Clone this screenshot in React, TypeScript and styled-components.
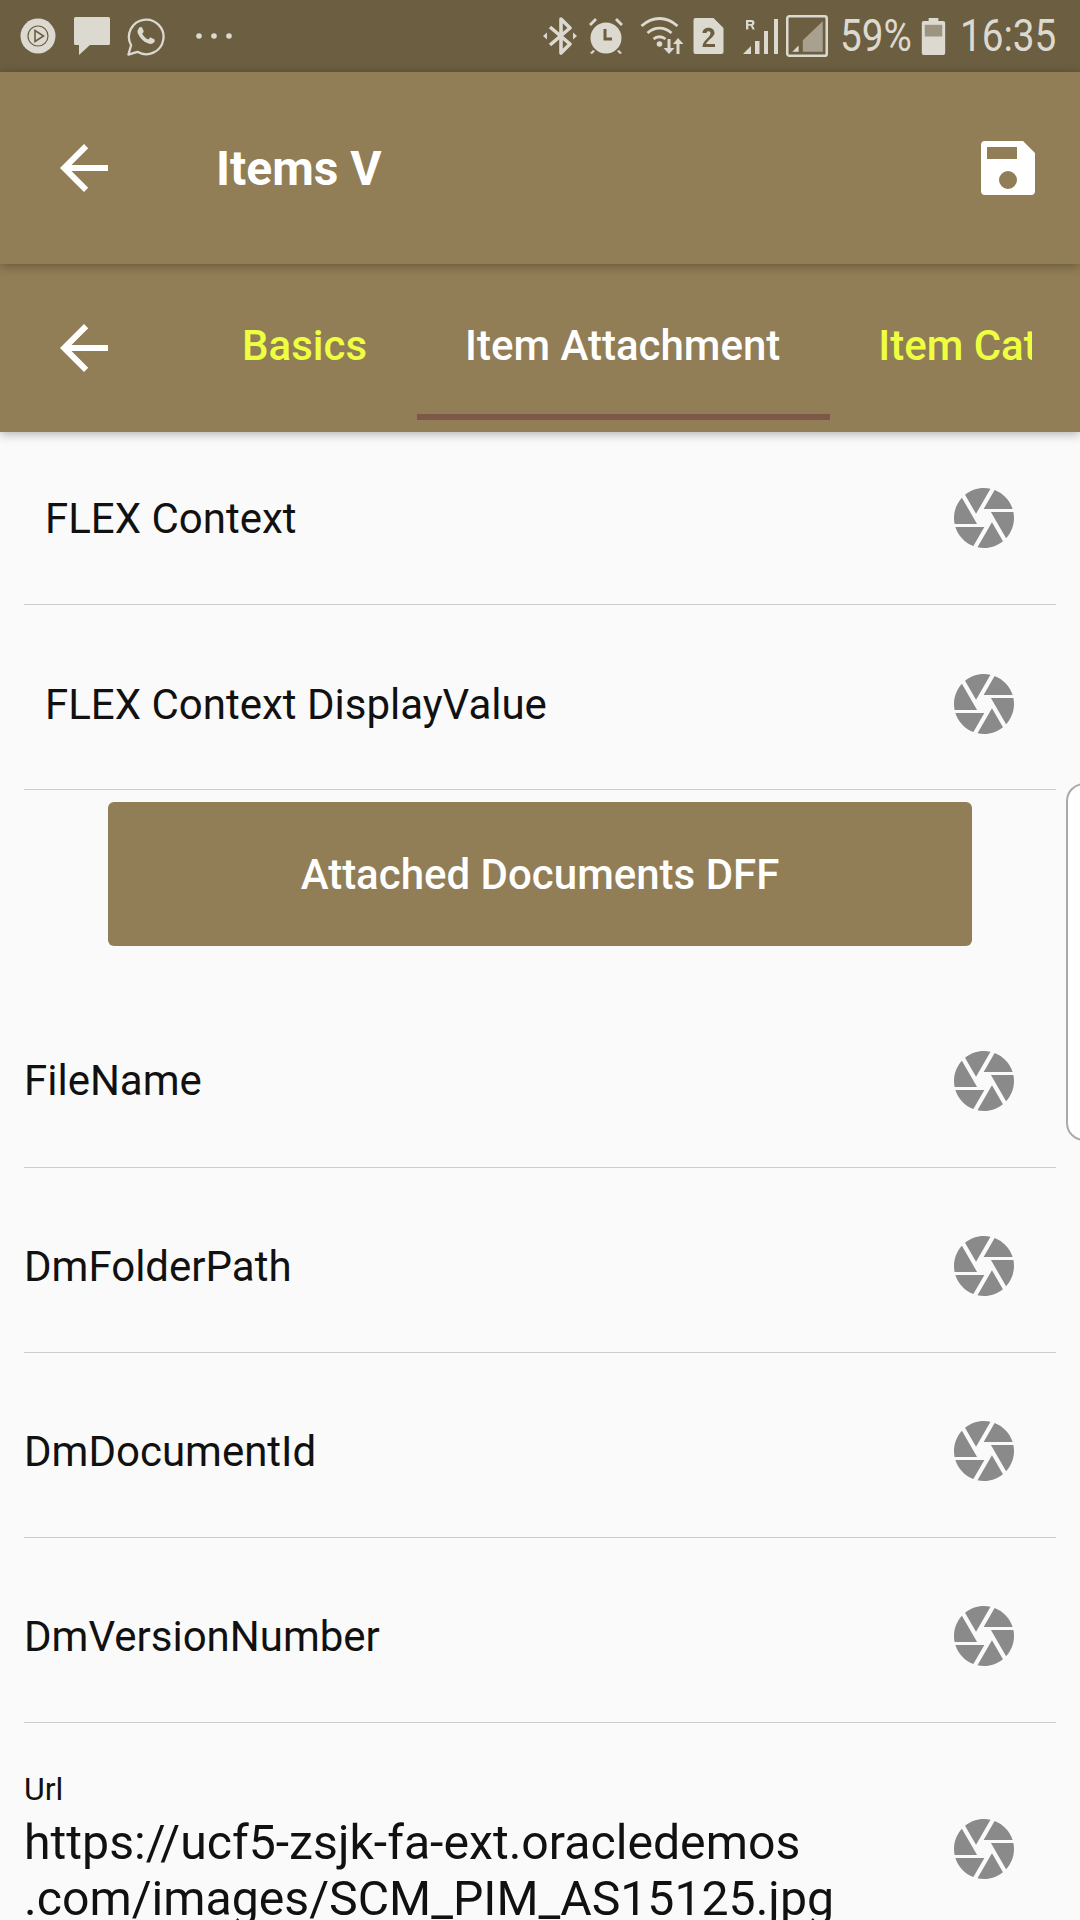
import React from "react";
import styled, { createGlobalStyle } from "styled-components";

const Global = createGlobalStyle`
  html, body { margin: 0; padding: 0; background: #fafafa; }
  * { box-sizing: border-box; }
`;

const Screen = styled.div`
  width: 1080px;
  height: 1920px;
  overflow: hidden;
  position: relative;
  background: #fafafa;
  font-family: Roboto, "Noto Sans", sans-serif;
  color: #111;
`;

const StatusBar = styled.div`
  height: 72px;
  background: #6c5e40;
  color: #dcd9d0;
  display: flex;
  align-items: center;
  justify-content: space-between;
  padding: 0 24px 0 20px;
`;
const StatusGroup = styled.div`
  display: flex;
  align-items: center;
`;
const StatusSlot = styled.span<{ $ml?: number; $w: number }>`
  display: flex;
  align-items: center;
  flex: none;
  margin-left: ${(p) => p.$ml ?? 0}px;
  width: ${(p) => p.$w}px;
`;
const StatusText = styled.span`
  font-size: 45px;
  line-height: 72px;
  display: inline-block;
  transform: scaleX(0.86);
  transform-origin: left center;
  white-space: nowrap;
`;

const Bar = styled.div<{ $h: number }>`
  height: ${(p) => p.$h}px;
  background: #917d56;
  position: relative;
  display: flex;
  align-items: center;
  box-shadow: 0 2px 10px rgba(0, 0, 0, 0.3);
`;
const Header = styled(Bar)`
  z-index: 2;
  padding-left: 48px;
`;
const TabBar = styled(Bar)`
  z-index: 1;
  padding-left: 48px;
  align-items: flex-start;
`;
const BackSlot = styled.div<{ $h?: number }>`
  width: 100px;
  height: ${(p) => (p.$h ? `${p.$h}px` : "auto")};
  display: flex;
  align-items: center;
  flex: none;
`;
const Title = styled.h1`
  margin: 0 0 0 68px;
  font-size: 48px;
  font-weight: 700;
  color: #fff;
  flex: 1;
`;
const SaveSlot = styled.div`
  width: 54px;
  margin-right: 45px;
  display: flex;
`;
const Tabs = styled.div`
  display: flex;
  width: 838px;
  margin-left: 46px;
  overflow: hidden;
`;
const Tab = styled.div<{ $active?: boolean }>`
  flex: none;
  padding: 12px 50px 0 48px;
  height: 156px;
  display: flex;
  align-items: center;
  font-size: 42px;
  font-weight: 500;
  color: ${(p) => (p.$active ? "#fff" : "#eeff41")};
  border-bottom: 6px solid ${(p) => (p.$active ? "#7b5848" : "transparent")};
`;

const Body = styled.div`
  padding: 0 24px;
`;
const Row = styled.div<{ $h: number; $inset?: boolean; $top: number }>`
  height: ${(p) => p.$h}px;
  border-bottom: 1.5px solid #c9ced2;
  display: flex;
  align-items: center;
  justify-content: space-between;
  padding: ${(p) => p.$top}px 36px 0 ${(p) => (p.$inset ? 21 : 0)}px;
  font-size: 42px;
`;
const UrlRow = styled.div`
  display: flex;
  align-items: center;
  justify-content: space-between;
  padding: 47px 36px 0 0;
`;
const UrlText = styled.div`
  display: flex;
  flex-direction: column;
`;
const UrlLabel = styled.div`
  font-size: 32px;
  line-height: 38px;
  margin-bottom: 7px;
`;
const UrlValue = styled.div`
  font-size: 48.2px;
  line-height: 56px;
  white-space: pre;
`;
const ActionRow = styled.div`
  display: flex;
  justify-content: center;
  padding: 12px 0 34px;
`;
const ActionButton = styled.button`
  width: 864px;
  height: 144px;
  padding: 1px 0 0;
  background: #917d56;
  color: #fff;
  border: none;
  border-radius: 6px;
  font-family: inherit;
  font-size: 42px;
  font-weight: 500;
`;
const EdgeHandle = styled.div`
  position: absolute;
  left: 1066px;
  top: 783px;
  width: 40px;
  height: 358px;
  border: 2px solid #aaa;
  border-radius: 18px;
  background: #fff;
`;

const Shutter = () => (
  <svg width="72" height="72" viewBox="0 0 24 24" fill="#8a8a8a" aria-hidden>
    <path d="M9.4 10.5l4.77-8.26C13.47 2.09 12.75 2 12 2c-2.4 0-4.6.85-6.32 2.25l3.66 6.35.06-.1zM21.54 9c-.92-2.92-3.15-5.26-6-6.34L11.88 9h9.66zm.26 1h-7.49l.29.5 4.76 8.25C21 16.97 22 14.61 22 12c0-.69-.07-1.35-.2-2zM8.54 12l-3.9-6.75C3.01 7.03 2 9.39 2 12c0 .69.07 1.35.2 2h7.49l-1.15-2zm-6.08 3c.92 2.92 3.15 5.26 6 6.34L12.12 15H2.46zm11.27 0l-3.9 6.76c.7.15 1.42.24 2.17.24 2.4 0 4.6-.85 6.32-2.25l-3.66-6.35-.93 1.6z" />
  </svg>
);

const Back = () => (
  <svg width="72" height="72" viewBox="0 0 24 24" fill="#fff" aria-hidden>
    <path d="M20 11H7.83l5.59-5.59L12 4l-8 8 8 8 1.41-1.41L7.83 13H20v-2z" />
  </svg>
);

const Save = () => (
  <svg width="54" height="54" viewBox="0 0 54 54" fill="#fff" aria-hidden>
    <path
      fillRule="evenodd"
      d="M4 0h38l12 12v38a4 4 0 0 1-4 4H4a4 4 0 0 1-4-4V4a4 4 0 0 1 4-4zM6 6v12h30V6zM27 30a9 9 0 1 0 0 18 9 9 0 0 0 0-18z"
    />
  </svg>
);

const c = "#dcd9d0";
const bg = "#6c5e40";

const PlayBadge = () => (
  <svg width="36" height="36" viewBox="0 0 36 36" aria-hidden>
    <circle cx="18" cy="18" r="17.5" fill={c} />
    <circle cx="18" cy="18" r="10" fill="none" stroke={bg} strokeWidth="1.2" />
    <path d="M15 12.5v11l8.500-5.500z" fill="none" stroke={bg} strokeWidth="1.6" />
  </svg>
);
const Chat = () => (
  <svg width="36" height="38" viewBox="0 0 36 38" aria-hidden>
    <path d="M1.500 0h33a1.500 1.500 0 0 1 1.500 1.500v25a1.500 1.500 0 0 1-1.500 1.500H16L5 38V28H1.500A1.500 1.500 0 0 1 0 26.500v-25A1.500 1.500 0 0 1 1.500 0z" fill={c} />
  </svg>
);
const Whats = () => (
  <svg width="38" height="39" viewBox="0 0 40 41" aria-hidden>
    <path d="M1.500 39.500l2.800-9.800A18.200 18.200 0 1 1 11 36.600z" fill="none" stroke={c} strokeWidth="2.400" strokeLinejoin="round" />
    <path d="M12.500 11.500c1-1.300 3-1.400 3.500-.2l1.500 3.300c.2.600 0 1.100-.4 1.600l-1.100 1.300c1.400 2.800 3.300 4.600 6.400 6.200l1.500-1.600c.5-.5 1-.6 1.600-.3l3.100 1.500c.9.500.9 2.400-.2 3.500-1.500 1.600-3.800 1.900-6.300.9-5.200-2-8.800-5.800-10.600-10.400-.8-2.100-.5-3.900 1-5.300z" fill={c} />
  </svg>
);
const Dots = () => (
  <svg width="38" height="8" viewBox="0 0 38 8" aria-hidden>
    <circle cx="4" cy="4" r="2.800" fill={c} />
    <circle cx="19" cy="4" r="2.800" fill={c} />
    <circle cx="34" cy="4" r="2.800" fill={c} />
  </svg>
);
const BT = () => (
  <svg width="34" height="38" viewBox="0 0 34 38" aria-hidden>
    <path d="M7 10l20 17-9 9V2l9 9L7 28" fill="none" stroke={c} strokeWidth="3.600" strokeLinejoin="round" />
    <path d="M0 19l4-3.500v7zM34 19l-4-3.500v7z" fill={c} />
  </svg>
);
const Alarm = () => (
  <svg width="36" height="38" viewBox="0 0 36 38" aria-hidden>
    <circle cx="18" cy="21" r="15.500" fill={c} />
    <path d="M17 12v10h7" fill="none" stroke={bg} strokeWidth="3" />
    <path d="M1 7l6-6 2 2-6 6zM35 7l-6-6-2 2 6 6zM5 33l-3 3 2 1 3-3zM31 33l3 3-2 1-3-3z" fill={c} />
  </svg>
);
const Wifi = () => (
  <svg width="49" height="38" viewBox="0 0 46 38" aria-hidden>
    <path d="M2 9c11-10 25-10 36 0M8 16c7-6.500 17-6.500 24 0M14 22c3.500-3 8.500-3 12 0" fill="none" stroke={c} strokeWidth="2.800" />
    <circle cx="20" cy="27" r="2.800" fill={c} />
    <path d="M28 22h3v9h4l-5.500 6L24 31h4zM40 37h-3v-10h-3.500l5-6 5.500 6H40z" fill={c} />
  </svg>
);
const Sim = () => (
  <svg width="31" height="36" viewBox="0 0 30 36" aria-hidden>
    <path d="M2 0h18l10 10v24a2 2 0 0 1-2 2H2a2 2 0 0 1-2-2V2a2 2 0 0 1 2-2z" fill={c} />
    <path d="M9 15c0-7 12-7 12 0 0 4-7 7-8.500 11H21.500v3H9c0-7 8-9 8-14 0-2.500-4-2.500-4 0z" fill={bg} />
  </svg>
);
const Signal = () => (
  <svg width="36" height="38" viewBox="0 0 36 38" aria-hidden>
    <path d="M0 37l8-8v8zM12 24h4.500v13H12zM21 14h4v23h-4zM31 2h4v35h-4z" fill={c} />
    <path d="M3 3h5.500c2 0 3 1 3 2.800 0 1.400-.6 2.200-1.700 2.600l2 4.100H9.500L7.800 8.800H5.300v3.700H3zM5.300 5v2h3c1 0 1-2 0-2z" fill={c} />
  </svg>
);
const Signal2 = () => (
  <svg width="42" height="42" viewBox="0 0 40 40" aria-hidden>
    <rect x="1.200" y="1.200" width="37.600" height="37.600" rx="2" fill="none" stroke={c} strokeWidth="2.400" />
    <path d="M6 35l6-6v6z" fill={c} />
    <path d="M16 35V24L35 6v29z" fill={c} opacity="0.55" />
  </svg>
);
const Battery = () => (
  <svg width="25" height="37" viewBox="0 0 24 38" aria-hidden>
    <path d="M7 0h10v3h5a2 2 0 0 1 2 2v31a2 2 0 0 1-2 2H2a2 2 0 0 1-2-2V5a2 2 0 0 1 2-2h5z" fill={c} />
    <rect x="3" y="7" width="18" height="12" fill="#9d9480" />
  </svg>
);

const fields = ["FileName", "DmFolderPath", "DmDocumentId", "DmVersionNumber"];

export default function App() {
  return (
    <Screen>
      <Global />
      <StatusBar>
        <StatusGroup>
          <StatusSlot $w={36}><PlayBadge /></StatusSlot>
          <StatusSlot $w={36} $ml={18}><Chat /></StatusSlot>
          <StatusSlot $w={38} $ml={17}><Whats /></StatusSlot>
          <StatusSlot $w={38} $ml={30}><Dots /></StatusSlot>
        </StatusGroup>
        <StatusGroup>
          <StatusSlot $w={34}><BT /></StatusSlot>
          <StatusSlot $w={36} $ml={11}><Alarm /></StatusSlot>
          <StatusSlot $w={49} $ml={14}><Wifi /></StatusSlot>
          <StatusSlot $w={31} $ml={6}><Sim /></StatusSlot>
          <StatusSlot $w={36} $ml={19}><Signal /></StatusSlot>
          <StatusSlot $w={42} $ml={7}><Signal2 /></StatusSlot>
          <StatusSlot $w={68} $ml={12}><StatusText>59%</StatusText></StatusSlot>
          <StatusSlot $w={25} $ml={13}><Battery /></StatusSlot>
          <StatusSlot $w={96} $ml={14}><StatusText>16:35</StatusText></StatusSlot>
        </StatusGroup>
      </StatusBar>
      <Header $h={192}>
        <BackSlot>
          <Back />
        </BackSlot>
        <Title>Items V</Title>
        <SaveSlot>
          <Save />
        </SaveSlot>
      </Header>
      <TabBar $h={168}>
        <BackSlot $h={168}>
          <Back />
        </BackSlot>
        <Tabs>
          <Tab>Basics</Tab>
          <Tab $active>Item Attachment</Tab>
          <Tab>Item Category</Tab>
        </Tabs>
      </TabBar>
      <Body>
        <Row $h={173} $top={0} $inset>
          FLEX Context
          <Shutter />
        </Row>
        <Row $h={185} $top={14} $inset>
          FLEX Context DisplayValue
          <Shutter />
        </Row>
        <ActionRow>
          <ActionButton>Attached Documents DFF</ActionButton>
        </ActionRow>
        {fields.map((f, i) => (
          <Row key={f} $h={i === 0 ? 188 : 185} $top={i === 0 ? 14 : 12}>
            {f}
            <Shutter />
          </Row>
        ))}
        <UrlRow>
          <UrlText>
            <UrlLabel>Url</UrlLabel>
            <UrlValue>{"https://ucf5-zsjk-fa-ext.oracledemos\n.com/images/SCM_PIM_AS15125.jpg"}</UrlValue>
          </UrlText>
          <Shutter />
        </UrlRow>
      </Body>
      <EdgeHandle />
    </Screen>
  );
}
